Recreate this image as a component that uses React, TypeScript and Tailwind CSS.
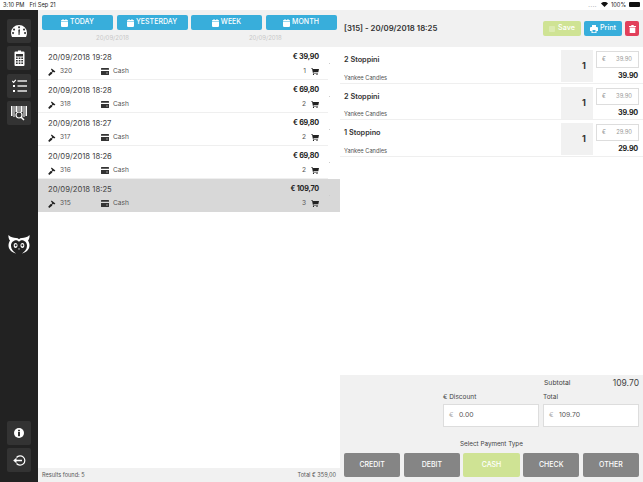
import React from "react";

const Calendar = () => (
  <svg width="7" height="8" viewBox="0 0 9 10" className="shrink-0"><path fill="#fff" d="M0 3.6h9V9a1 1 0 0 1-1 1H1a1 1 0 0 1-1-1zM1 1.2h1V0h1.2v1.2h2.6V0H7v1.2h1a1 1 0 0 1 1 1V3H0v-.8a1 1 0 0 1 1-1z"/></svg>
);
const Gavel = () => (
  <svg width="8" height="8" viewBox="0 0 8 8" className="shrink-0"><path fill="#222" d="M3.6 0.4 7.4 3.4 6.2 4.6 5 3.8 4 4.9 4.4 5.6 1.2 7.9 0.2 6.8 2.6 4 3.4 4.3 4.2 3.1 3 1.6z"/></svg>
);
const Card = () => (
  <svg width="8" height="7" viewBox="0 0 8 7" className="shrink-0"><path fill="#333" d="M0.6 0H7.4A.6.6 0 0 1 8 .6V1.800H0V.6A.6.6 0 0 1 .6 0zM0 3H8V6.400A.6.6 0 0 1 7.400 7H.6A.6.6 0 0 1 0 6.400z"/><rect x="5" y="4.500" width="2" height="1" fill="#999"/></svg>
);
const Cart = () => (
  <svg width="8" height="7" viewBox="0 0 8 7" className="shrink-0"><path fill="#222" d="M0 0H1.500L1.800 1H8L7.300 4.200H2.400L2.600 5H7V5.600H2L1 .6H0z"/><circle cx="2.500" cy="6.400" r=".6" fill="#222"/><circle cx="6" cy="6.400" r=".6" fill="#222"/></svg>
);

const Tile = ({ children }: { children: React.ReactNode }) => (
  <div className="w-[24px] h-[24px] rounded-[2px] bg-[#333333] flex items-center justify-center">{children}</div>
);

const rows = [
  { d: "20/09/2018 19:28", p: "€ 39,90", id: "320", n: "1" },
  { d: "20/09/2018 18:28", p: "€ 69,80", id: "318", n: "2" },
  { d: "20/09/2018 18:27", p: "€ 69,80", id: "317", n: "2" },
  { d: "20/09/2018 18:26", p: "€ 69,80", id: "316", n: "2" },
  { d: "20/09/2018 18:25", p: "€ 109,70", id: "315", n: "3", sel: true },
];

const items = [
  { t: "2 Stoppini", v: "39.90" },
  { t: "2 Stoppini", v: "39.90" },
  { t: "1 Stoppino", v: "29.90" },
];

const NavBtn = ({ label }: { label: string }) => (
  <div className="w-[71px] h-[15px] rounded-[2px] bg-[#38aedb] flex items-center justify-center gap-[2px] text-white text-[7px] font-medium">
    <Calendar />
    <span>{label}</span>
  </div>
);

export default function App() {
  return (
    <div className="w-[643px] h-[482px] bg-white overflow-hidden flex flex-col text-[#333] [font-family:Inter,'Liberation_Sans',sans-serif]">
      <div className="h-[10px] flex items-center justify-between pl-[3px] pr-[3px] text-[5.700px] text-[#222] shrink-0">
        <div className="flex gap-[5px]"><span>3:10 PM</span><span>Fri Sep 21</span></div>
        <div className="flex items-center gap-[2px]">
          <span className="text-[#999] mr-[2px] tracking-[0.5px] leading-[5px]">....</span>
          <svg width="7" height="5" viewBox="0 0 7 5"><path fill="#111" d="M0 1.500C2 -.4 5 -.4 7 1.500L3.500 5z"/></svg>
          <span className="ml-[1px]">100%</span>
          <div className="w-[11px] h-[5px] rounded-[1px] bg-[#111] ml-[1px]" />
        </div>
      </div>
      <div className="flex-1 flex min-h-0">
        <aside className="w-[38px] bg-[#222222] shrink-0 flex flex-col items-center pt-[9px] pb-[10px]">
          <div className="flex flex-col gap-[3.400px]">
            <Tile>
              <svg width="16" height="12" viewBox="0 0 16 12"><path fill="#fff" fillRule="evenodd" d="M8 0a8 8 0 0 1 8 8c0 1.500-.4 2.800-1 4H1C.4 10.800 0 9.500 0 8a8 8 0 0 1 8-8zM7.300 5 7.600 10h.9L9 5 8.200 4zM3 3.500a1 1 0 1 0 .1 0zM8 1.300a1 1 0 1 0 .1 0zM13 3.500a1 1 0 1 0 .1 0zM2 7a1 1 0 1 0 .1 0zM14 7a1 1 0 1 0 .1 0z"/></svg>
            </Tile>
            <Tile>
              <svg width="11" height="16" viewBox="0 0 11 16"><path fill="#fff" fillRule="evenodd" d="M1.500 1.500H4V.5h3v1h2.500a1 1 0 0 1 1 1V15a1 1 0 0 1-1 1h-8a1 1 0 0 1-1-1V2.500a1 1 0 0 1 1-1zM2 4v2.500h7V4zM2 7.500v1.500h1.700V7.500zM4.700 7.500v1.500h1.700V7.500zM7.300 7.500v1.500H9V7.500zM2 10v1.500h1.700V10zM4.700 10v1.500h1.700V10zM7.300 10v1.500H9V10zM2 12.500V14h1.700v-1.500zM4.700 12.500V14h1.700v-1.500zM7.300 12.500V14H9v-1.500z"/></svg>
            </Tile>
            <Tile>
              <svg width="15" height="14" viewBox="0 0 15 14"><path fill="none" stroke="#fff" strokeWidth="1.200" d="M0.300 2 1.600 3.300 3.800 .8"/><rect x="5.500" y="1" width="9.500" height="2" fill="#bbb"/><rect x="1" y="6" width="2" height="2" fill="#fff"/><rect x="5.500" y="6" width="9.500" height="2" fill="#bbb"/><rect x="1" y="11" width="2" height="2" fill="#fff"/><rect x="5.500" y="11" width="9.500" height="2" fill="#bbb"/></svg>
            </Tile>
            <Tile>
              <svg width="16" height="16" viewBox="0 0 16 16"><g fill="#fff"><rect x="0" y="1" width="1.500" height="10"/><rect x="2.500" y="1" width="1" height="11"/><rect x="4.500" y="1" width="2" height="6"/><rect x="7.500" y="1" width="1" height="5"/><rect x="9.500" y="1" width="2" height="6"/><rect x="12.500" y="1" width="1" height="11"/><rect x="14.500" y="1" width="1.500" height="10"/></g><circle cx="8" cy="10" r="3" fill="none" stroke="#fff" strokeWidth="1.200"/><path d="M10.200 12.200 13 15" stroke="#fff" strokeWidth="1.500"/></svg>
            </Tile>
          </div>
          <div className="mt-[110px]">
            <svg width="22" height="19" viewBox="0 0 22 19">
              <path fill="#fff" d="M.5 0C2.500 2.300 5.500 3 8 3c1.300 0 2.300.4 3 1.200C11.700 3.400 12.700 3 14 3c2.500 0 5.500-.7 7.500-3 .3 2.300-.3 4.200-1.500 5.500 1 1.600 1.500 3.400 1.500 5 0 3.700-3 6.800-7.500 8 2.600-1.800 5-4.400 5-7.800C19 7.500 16.500 5.200 14 5.200c-1.300 0-2.300.6-3 1.500-.7-.9-1.700-1.500-3-1.500C5.500 5.200 3 7.500 3 10.700c0 3.400 2.400 6 5 7.800C3.500 17.300.5 14.200.5 10.500c0-1.600.5-3.400 1.500-5C.8 4.200.2 2.300.5 0z"/>
              <path fill="#fff" fillRule="evenodd" d="M7.500 8C8.800 8 9.500 9.200 9.500 10.500S8.800 13 7.500 13 5.700 11.800 5.700 10.500 6.200 8 7.500 8zM7.700 9.300a1 1 0 1 0 .1 0zM14.500 8c1.300 0 1.800 1.200 1.800 2.500s-.6 2.500-1.800 2.500-2-1.200-2-2.500.7-2.500 2-2.500zM14.300 9.300a1 1 0 1 0 .1 0z"/>
              <path fill="#fff" d="M10.200 13.500h1.600l-.8 1.600z"/>
            </svg>
          </div>
          <div className="mt-auto flex flex-col gap-[3.400px]">
            <Tile>
              <svg width="10" height="10" viewBox="0 0 10 10"><circle cx="5" cy="5" r="5" fill="#fff"/><rect x="4" y="1.800" width="2" height="1.500" fill="#333"/><rect x="4" y="4" width="2" height="4.200" fill="#333"/></svg>
            </Tile>
            <Tile>
              <svg width="13" height="11" viewBox="0 0 13 11"><path fill="none" stroke="#fff" strokeWidth="1.200" d="M3.500 2.500A4.700 4.700 0 1 1 3.500 8.500"/><path fill="none" stroke="#fff" strokeWidth="1.300" d="M9 5.500H1.500M3.500 3.500 1.200 5.500 3.500 7.500"/></svg>
            </Tile>
          </div>
        </aside>

        <main className="w-[302px] shrink-0 flex flex-col">
          <div className="h-[37px] bg-[#f1f1f1] pt-[5px] pl-[4px] pr-[3px] shrink-0">
            <div className="flex gap-[3.500px]">
              <NavBtn label="TODAY" />
              <NavBtn label="YESTERDAY" />
              <NavBtn label="WEEK" />
              <NavBtn label="MONTH" />
            </div>
            <div className="flex mt-[4px] text-[6px] text-[#c8c8c8] leading-[8px]">
              <span className="ml-[54px]">20/09/2018</span>
              <span className="ml-[120px]">20/09/2018</span>
            </div>
          </div>
          <div className="flex-1 flex flex-col min-h-0">
            {rows.map((r) => (
              <div key={r.id} className={`h-[33px] shrink-0 flex ${r.sel ? "bg-[#d8d8d8]" : ""}`}>
                <div className={`w-[290px] pl-[10px] pr-[9px] pt-[5px] ${r.sel ? "" : "border-b border-[#efefef]"}`}>
                  <div className="flex justify-between items-center h-[11px]">
                    <span className="text-[7.700px] text-[#444]">{r.d}</span>
                    <span className="text-[7.200px] font-bold text-[#222] tracking-[-0.2px]">{r.p}</span>
                  </div>
                  <div className="flex items-center h-[11px] mt-[3px] text-[6.600px] text-[#555]">
                    <Gavel />
                    <span className="ml-[4px] w-[41px]">{r.id}</span>
                    <Card />
                    <span className="ml-[4px]">Cash</span>
                    <span className="ml-auto mr-[5px]">{r.n}</span>
                    <Cart />
                  </div>
                </div>
                <div className="flex-1 flex items-center pl-[1px]"><span className="w-[1px] h-[1px] bg-[#cccccc]" /></div>
              </div>
            ))}
          </div>
          <div className="h-[14px] bg-[#f1f1f1] flex items-center justify-between px-[4px] text-[5.600px] text-[#555] shrink-0">
            <span>Results found: 5</span>
            <span>Total € 359,00</span>
          </div>
        </main>

        <section className="flex-1 flex flex-col min-w-0">
          <div className="h-[37px] bg-[#f1f1f1] flex items-center pl-[4px] pr-[4px] shrink-0">
            <span className="text-[7.800px] font-semibold text-[#333]">[315] - 20/09/2018 18:25</span>
            <div className="ml-auto flex gap-[3px]">
              <div className="w-[38px] h-[15px] rounded-[2px] bg-[#cfe394] flex items-center justify-center gap-[3px] text-white text-[7.200px] font-medium">
                <span className="w-[6px] h-[6px] bg-[#dcebb0] rounded-[1px]" />Save
              </div>
              <div className="w-[38px] h-[15px] rounded-[2px] bg-[#38aedb] flex items-center justify-center gap-[2px] text-white text-[7.200px] font-medium">
                <svg width="8" height="8" viewBox="0 0 8 8"><path fill="#fff" d="M2 0H6V2H7A1 1 0 0 1 8 3V6H6.500V8H1.500V6H0V3A1 1 0 0 1 1 2H2zM2.500 5V7.300H5.500V5z"/></svg>
                Print
              </div>
              <div className="w-[14px] h-[15px] rounded-[2px] bg-[#e2405a] flex items-center justify-center">
                <svg width="7" height="8" viewBox="0 0 7 8"><path fill="#fff" d="M0 1H2.300V0H4.700V1H7V2H0zM.7 2.500H6.300V8H.7z"/></svg>
              </div>
            </div>
          </div>
          <div className="flex-1 flex flex-col min-h-0">
            {items.map((it, i) => (
              <div key={i} className="h-[36.600px] border-b border-[#efefef] shrink-0 flex pl-[4px] pr-[4px] pt-[3px]">
                <div className="flex-1 flex flex-col pt-[3px]">
                  <span className="text-[7.300px] font-semibold text-[#333] leading-[10px] mt-[2px]">{it.t}</span>
                  <span className="text-[5.700px] text-[#555] mt-auto mb-[1px] leading-[8px]">Yankee Candles</span>
                </div>
                <div className="w-[32px] h-[32px] bg-[#f1f1f1] flex items-center justify-end pr-[7px] text-[9px] font-bold text-[#333]">1</div>
                <div className="w-[43px] ml-[3px] flex flex-col items-stretch pt-[1px]">
                  <div className="h-[17px] border border-[#dddddd] bg-white flex items-center justify-between pl-[5px] pr-[6px] text-[5.800px] text-[#999]">
                    <span>€</span>
                    <span>{it.v}</span>
                  </div>
                  <span className="text-right pr-[1px] text-[7.200px] font-bold text-[#222] tracking-[-0.2px] mt-[3px] leading-[10px]">{it.v}</span>
                </div>
              </div>
            ))}
          </div>
          <div className="h-[107px] bg-[#f1f1f1] shrink-0 px-[4px] pt-[4px] flex flex-col">
            <div className="flex justify-between items-center pl-[200px] h-[9px] text-[#444]">
              <span className="text-[6.800px]">Subtotal</span>
              <span className="text-[8.500px]">109.70</span>
            </div>
            <div className="flex justify-end gap-[4px] mt-[5px] text-[6.500px] text-[#444]">
              <span className="w-[96px] leading-[9px]">€ Discount</span>
              <span className="w-[96px] leading-[9px]">Total</span>
            </div>
            <div className="flex justify-end gap-[4px] mt-[2px]">
              {["0.00", "109.70"].map((v) => (
                <div key={v} className="w-[96px] h-[23px] bg-white border border-[#dddddd] flex items-center pl-[5px] text-[6.800px] text-[#555]">
                  <span className="text-[#aaa] w-[10px]">€</span>{v}
                </div>
              ))}
            </div>
            <div className="text-center text-[6.300px] text-[#444] mt-[13px] leading-[9px]">Select Payment Type</div>
            <div className="flex gap-[3.500px] mt-[4px]">
              {["CREDIT", "DEBIT", "CASH", "CHECK", "OTHER"].map((p) => (
                <div key={p} className={`flex-1 h-[24px] rounded-[2px] flex items-center justify-center text-white text-[7px] font-medium ${p === "CASH" ? "bg-[#cfe394]" : "bg-[#858585]"}`}>{p}</div>
              ))}
            </div>
          </div>
        </section>
      </div>
    </div>
  );
}
